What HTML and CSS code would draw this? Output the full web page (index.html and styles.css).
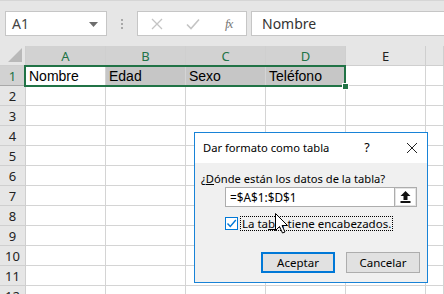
FILE: index.html
```html
<!DOCTYPE html>
<html lang="es">
<head>
  <meta charset="UTF-8" />
  <title>Dar formato como tabla</title>
  <link rel="stylesheet" href="styles.css">
</head>
<body>
  <div class="app">
    <!-- name box + formula bar -->
    <div class="topbar">
      <div class="namebox">
        <span>A1</span>
        <svg class="drop" width="9" height="5" viewBox="0 0 9 5"><path d="M0 0h9L4.5 5z" fill="#6d6d6d"/></svg>
      </div>
      <div class="grip"><i></i><i></i><i></i></div>
      <div class="fxtools">
        <svg width="12" height="12" viewBox="0 0 12 12"><path d="M1 1l10 10M11 1L1 11" stroke="#c4c4c4" stroke-width="1.3" fill="none"/></svg>
        <svg class="ok" width="14" height="12" viewBox="0 0 14 12"><path d="M1 6.5l4 4L13 1.5" stroke="#c4c4c4" stroke-width="1.6" fill="none"/></svg>
        <span class="fx">fx</span>
      </div>
      <div class="formula">Nombre</div>
    </div>

    <!-- grid -->
    <div class="sheet">
      <div class="corner"><svg width="14" height="14" viewBox="0 0 14 14"><path d="M14 0v14H0z" fill="#b9b9b9"/></svg></div>
      <div class="colh sel">A</div>
      <div class="colh sel">B</div>
      <div class="colh sel">C</div>
      <div class="colh sel">D</div>
      <div class="colh">E</div>
      <div class="colh"></div>

      <div class="rowh sel">1</div>
      <div class="cell">Nombre</div>
      <div class="cell fill">Edad</div>
      <div class="cell fill">Sexo</div>
      <div class="cell fill">Teléfono</div>
      <div class="cell"></div>
      <div class="cell"></div>

      <div class="rowh">2</div><div class="cell"></div><div class="cell"></div><div class="cell"></div><div class="cell"></div><div class="cell"></div><div class="cell"></div>
      <div class="rowh">3</div><div class="cell"></div><div class="cell"></div><div class="cell"></div><div class="cell"></div><div class="cell"></div><div class="cell"></div>
      <div class="rowh">4</div><div class="cell"></div><div class="cell"></div><div class="cell"></div><div class="cell"></div><div class="cell"></div><div class="cell"></div>
      <div class="rowh">5</div><div class="cell"></div><div class="cell"></div><div class="cell"></div><div class="cell"></div><div class="cell"></div><div class="cell"></div>
      <div class="rowh">6</div><div class="cell"></div><div class="cell"></div><div class="cell"></div><div class="cell"></div><div class="cell"></div><div class="cell"></div>
      <div class="rowh">7</div><div class="cell"></div><div class="cell"></div><div class="cell"></div><div class="cell"></div><div class="cell"></div><div class="cell"></div>
      <div class="rowh">8</div><div class="cell"></div><div class="cell"></div><div class="cell"></div><div class="cell"></div><div class="cell"></div><div class="cell"></div>
      <div class="rowh">9</div><div class="cell"></div><div class="cell"></div><div class="cell"></div><div class="cell"></div><div class="cell"></div><div class="cell"></div>
      <div class="rowh">10</div><div class="cell"></div><div class="cell"></div><div class="cell"></div><div class="cell"></div><div class="cell"></div><div class="cell"></div>
      <div class="rowh">11</div><div class="cell"></div><div class="cell"></div><div class="cell"></div><div class="cell"></div><div class="cell"></div><div class="cell"></div>
      <div class="rowh">12</div><div class="cell"></div><div class="cell"></div><div class="cell"></div><div class="cell"></div><div class="cell"></div><div class="cell"></div>

      <div class="selection"><span class="handle"></span></div>
    </div>

    <!-- dialog -->
    <div class="dialog">
      <div class="dlg-title">
        <span>Dar formato como tabla</span>
        <span class="help">?</span>
        <svg class="close" width="12" height="12" viewBox="0 0 12 12"><path d="M1 1l10 10M11 1L1 11" stroke="#222" stroke-width="1" fill="none"/></svg>
      </div>
      <div class="dlg-body">
        <div class="question">¿<u>D</u>ónde están los datos de la tabla?</div>
        <div class="range">
          <span class="range-val">=$A$1:$D$1</span>
          <span class="range-btn">
            <svg width="11" height="12" viewBox="0 0 11 12"><path d="M5.5 0L10.5 5H7.5V9H3.5V5H0.5z" fill="#111"/><rect x="0.5" y="10" width="10" height="2" fill="#111"/></svg>
          </span>
        </div>
        <div class="check-row">
          <span class="checkbox">
            <svg width="11" height="11" viewBox="0 0 11 11"><path d="M1.5 5.5l2.8 3L9.8 2" stroke="#0078d7" stroke-width="1.4" fill="none"/></svg>
          </span>
          <span class="check-label">La ta<u>b</u>la tiene encabezados.</span>
        </div>
        <div class="actions">
          <button class="btn primary">Aceptar</button>
          <button class="btn">Cancelar</button>
        </div>
      </div>
    </div>

    <svg class="pointer" width="13" height="21" viewBox="0 0 13 21"><path d="M0.5 0.5V17.5L4.5 13.5L7.5 20L10 19L7 12.5H12.5z" fill="#fff" stroke="#000" stroke-width="1"/></svg>
  </div>
</body>
</html>
```

FILE: styles.css
```css
*{box-sizing:border-box;margin:0;padding:0}
body{width:444px;height:294px;overflow:hidden;background:#fff;font-family:"Liberation Sans",Arial,sans-serif}
.app{position:relative;width:444px;height:294px;overflow:hidden}

/* top bar */
.topbar{height:46px;background:#e6e6e6;border-top:1px solid #d6d6d6;display:flex;align-items:flex-start;
        padding:10px 0 0 5px}
.namebox{width:102px;height:25px;background:#fff;border:1px solid #c6c6c6;display:flex;align-items:center;
         justify-content:space-between;padding:0 8px 0 6px;font-family:"Noto Sans",sans-serif;font-size:14px;color:#444}
.drop{margin-top:1px}
.grip{width:30px;height:25px;display:flex;flex-direction:column;align-items:center;justify-content:center;gap:2px}
.grip i{display:block;width:2px;height:2px;background:#a8a8a8}
.fxtools{width:110px;height:25px;background:#fff;border:1px solid #c6c6c6;display:flex;align-items:center;
         padding:0 0 0 13px}
.ok{margin-left:23px}
.fx{font-family:"Liberation Serif",serif;font-style:italic;font-size:13px;color:#777;margin-left:25px;letter-spacing:-1px}
.formula{flex:1;height:25px;margin-left:4px;background:#fff;border:1px solid #c6c6c6;border-right:none;
         font-family:"Noto Sans",sans-serif;font-size:14px;color:#333;padding:2px 0 0 10px}

/* sheet */
.sheet{position:relative;display:grid;grid-template-columns:26px repeat(5,80px) 1fr;grid-auto-rows:20px}
.corner,.colh,.rowh{background:#e6e6e6;border-right:1px solid #cfcfcf;border-bottom:1px solid #cfcfcf;
     font-family:"Noto Sans",sans-serif;font-size:13px;color:#222;display:flex;align-items:center;justify-content:center}
.corner{justify-content:flex-end;align-items:flex-end;padding:0 3px 3px 0}
.colh.sel,.rowh.sel{background:#d2d2d2;color:#217346;border-bottom-color:#a9a9a9}
.rowh.sel{border-right-color:#a9a9a9}
.cell{border-right:1px solid #d4d4d4;border-bottom:1px solid #d4d4d4;font-size:14px;color:#000;
      padding:1px 0 0 3px;line-height:18px;white-space:nowrap}
.cell.fill{background:#c6c6c6}
.selection{position:absolute;left:24px;top:19px;width:322px;height:22px;border:2px solid #217346}
.handle{position:absolute;right:-5px;bottom:-5px;width:7px;height:7px;background:#217346;border:1px solid #fff}

/* dialog */
.dialog{position:absolute;left:194px;top:132px;width:234px;height:151px;border:1px solid #1883d7;
        background:#f0f0f0;font-family:"Noto Sans",sans-serif;font-size:11.2px;color:#000}
.dlg-title{height:30px;background:#fff;display:flex;align-items:center;padding:0 0 1px 8px;font-size:11.2px}
.help{margin-left:35px;font-size:12.5px}
.close{margin-left:36px}
.dlg-body{padding:8px 0 0 6px}
.question{line-height:16px}
.range{margin:0 0 0 24px;width:192px;height:20px;background:#fff;border:1px solid #adadad;display:flex}
.range-val{flex:1;padding:1px 0 0 4px;font-size:11.8px}
.range-btn{width:22px;height:18px;border:1px solid #adadad;border-width:0 0 0 1px;display:flex;
           align-items:center;justify-content:center;background:#fff;box-shadow:inset 0 0 0 1px #e4e4e4}
.check-row{display:flex;align-items:center;margin:9px 0 0 24px;gap:2px}
.checkbox{width:13px;height:13px;border:1px solid #0078d7;background:#fff;display:flex;align-items:center;justify-content:center}
.check-label{border:1px dotted #000;padding:0 1px;line-height:13px;font-size:11.5px}
.actions{display:flex;gap:11px;margin:21px 0 0 60px}
.btn{width:74px;height:21px;font-family:"Noto Sans",sans-serif;font-size:11.5px;color:#000;background:#e1e1e1;
     border:1px solid #adadad}
.btn.primary{border:2px solid #0078d7}

.pointer{position:absolute;left:275px;top:213px}
```
